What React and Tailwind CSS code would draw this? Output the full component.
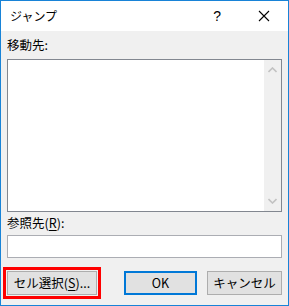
export default function App() {
  const font = { fontFamily: '"Noto Sans CJK JP", "Noto Sans", sans-serif' };
  return (
    <div
      className="w-[289px] h-[306px] border border-[#1883d7] flex flex-col bg-[#f0f0f0] text-[12px] text-black overflow-hidden"
      style={font}
    >
      <div className="h-[30px] bg-white flex items-center shrink-0">
        <span className="ml-[9px] text-[12px] leading-none">ジャンプ</span>
        <span className="ml-auto mr-[37px] text-[14px] leading-none" style={{ fontFamily: '"Liberation Sans", sans-serif' }}>?</span>
        <svg className="mr-[18px]" width="12" height="12" viewBox="0 0 12 12">
          <path d="M1 1 L11 11 M11 1 L1 11" stroke="#000" strokeWidth="1.1" fill="none" />
        </svg>
      </div>
      <div className="flex flex-col px-[6px]">
        <div className="h-[20px] leading-[20px] mt-[4px] text-[12.5px]">移動先:</div>
        <div className="mt-[4px] h-[153px] border border-[#828790] bg-white flex">
          <div className="flex-1" />
          <div className="w-[17px] bg-[#f0f0f0] flex flex-col items-center justify-between py-[7px]">
            <svg width="9" height="6" viewBox="0 0 9 6">
              <path d="M0.5 5 L4.5 1 L8.5 5" stroke="#c2c2c2" strokeWidth="1.6" fill="none" />
            </svg>
            <svg width="9" height="6" viewBox="0 0 9 6">
              <path d="M0.5 1 L4.5 5 L8.5 1" stroke="#c2c2c2" strokeWidth="1.6" fill="none" />
            </svg>
          </div>
        </div>
        <div className="h-[20px] leading-[20px] mt-[1px] text-[12.5px]">
          参照先(<span className="underline underline-offset-2">R</span>):
        </div>
        <div className="mt-[2px] h-[23px] border border-[#abadb3] bg-white" />
        <div className="mt-[9px] flex items-center">
          <div className="ml-[-4px] border-[3px] border-[#ff0000] p-px">
            <button className="w-[90px] h-[24px] bg-[#e1e1e1] border border-[#adadad] text-[12.5px] leading-none flex items-center justify-center">
              セル選択(<span className="underline underline-offset-2">S</span>)...
            </button>
          </div>
          <button className="ml-[23px] w-[73px] h-[24px] bg-[#e1e1e1] border-2 border-[#0078d7] text-[12.5px] leading-none flex items-center justify-center">
            OK
          </button>
          <button className="ml-[10px] w-[75px] h-[24px] bg-[#e1e1e1] border border-[#adadad] text-[12.5px] leading-none flex items-center justify-center">
            キャンセル
          </button>
        </div>
      </div>
    </div>
  );
}
